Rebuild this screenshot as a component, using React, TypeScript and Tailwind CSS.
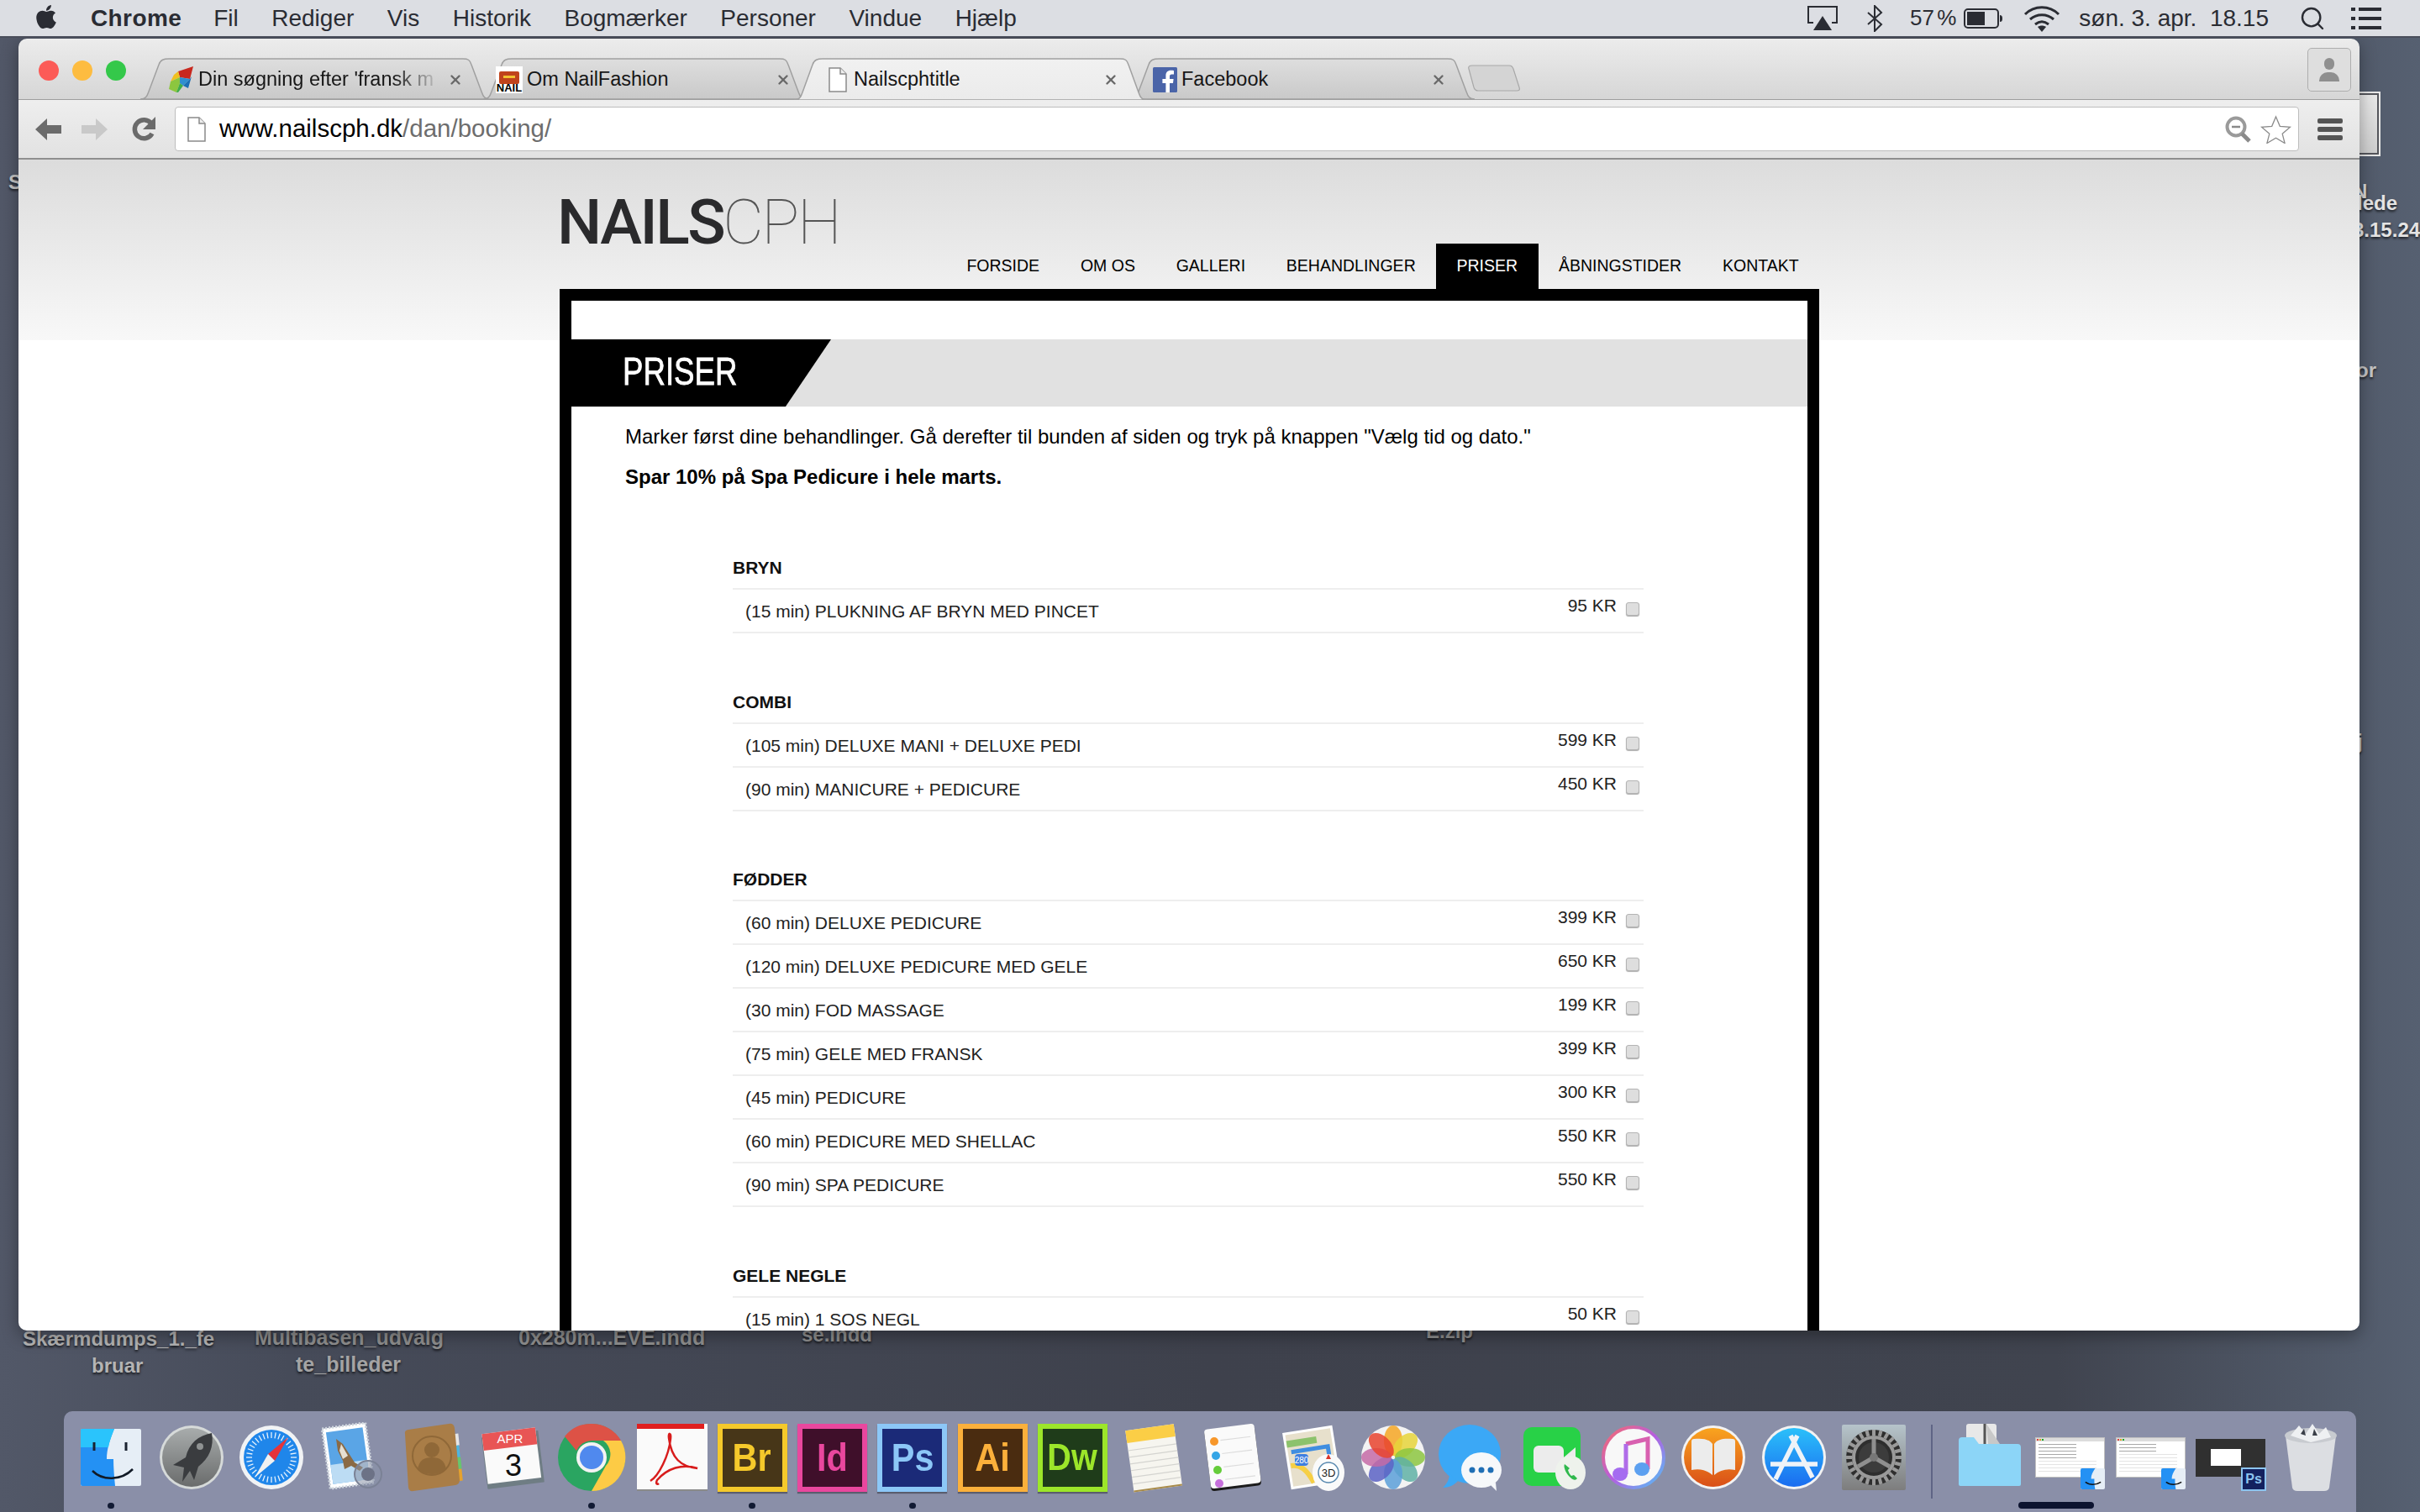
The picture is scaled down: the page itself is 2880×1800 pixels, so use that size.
import type { ReactNode } from 'react';
import { FaApple } from 'react-icons/fa';
import { X, Search } from 'lucide-react';

const sans = "font-['Liberation_Sans',Arial,sans-serif]";

const sections = [
  { title: 'BRYN', rows: [['(15 min) PLUKNING AF BRYN MED PINCET', '95 KR']] },
  {
    title: 'COMBI',
    rows: [
      ['(105 min) DELUXE MANI + DELUXE PEDI', '599 KR'],
      ['(90 min) MANICURE + PEDICURE', '450 KR'],
    ],
  },
  {
    title: 'FØDDER',
    rows: [
      ['(60 min) DELUXE PEDICURE', '399 KR'],
      ['(120 min) DELUXE PEDICURE MED GELE', '650 KR'],
      ['(30 min) FOD MASSAGE', '199 KR'],
      ['(75 min) GELE MED FRANSK', '399 KR'],
      ['(45 min) PEDICURE', '300 KR'],
      ['(60 min) PEDICURE MED SHELLAC', '550 KR'],
      ['(90 min) SPA PEDICURE', '550 KR'],
    ],
  },
  { title: 'GELE NEGLE', rows: [['(15 min) 1 SOS NEGL', '50 KR']] },
];

const navItems = ['FORSIDE', 'OM OS', 'GALLERI', 'BEHANDLINGER', 'PRISER', 'ÅBNINGSTIDER', 'KONTAKT'];
const menuItems = ['Fil', 'Rediger', 'Vis', 'Historik', 'Bogmærker', 'Personer', 'Vindue', 'Hjælp'];

function MenuBar() {
  return (
    <div className="relative z-20 flex h-[45px] items-center border-b-[2px] border-[#4a4e5b] bg-[#dcdee3] text-[28px] text-[#2a2c33]">
      <FaApple className="ml-[40px] mb-[3px] h-[32px] w-[30px]" />
      <span className="ml-[38px] font-bold tracking-[0.4px]">Chrome</span>
      <div className="ml-[38px] flex gap-[39.500px]">
        {menuItems.map((m) => (
          <span key={m}>{m}</span>
        ))}
      </div>
      <div className="ml-auto flex items-center">
        <svg width="36" height="30" viewBox="0 0 36 30" className="mr-[34px]">
          <path d="M7 20H1V1h34v19h-6" fill="none" stroke="#2a2c33" strokeWidth="2" />
          <path d="M18 12l11 17H7z" fill="#2a2c33" />
        </svg>
        <svg width="20" height="32" viewBox="0 0 20 32" className="mr-[32px]">
          <path d="M2 9l16 14-8 8V1l8 8L2 23" fill="none" stroke="#2a2c33" strokeWidth="2" />
        </svg>
        <span className="text-[26px] [word-spacing:-4px]">57 %</span>
        <svg width="46" height="24" viewBox="0 0 46 24" className="ml-[9px] mr-[25px]">
          <rect x="1" y="1" width="40" height="22" rx="4" fill="none" stroke="#2a2c33" strokeWidth="2" />
          <rect x="4" y="4" width="21" height="16" fill="#2a2c33" />
          <path d="M43 8c2 0 3 1 3 4s-1 4-3 4z" fill="#2a2c33" />
        </svg>
        <svg width="44" height="32" viewBox="0 0 44 32" className="mr-[22px]">
          <path d="M2 11c11-11 29-11 40 0M8 17c8-7 20-7 28 0M14 23c5-4 11-4 16 0" fill="none" stroke="#2a2c33" strokeWidth="3" />
          <path d="M22 32l-5-6c3-2 7-2 10 0z" fill="#2a2c33" />
        </svg>
        <span className="whitespace-pre">søn. 3. apr.  18.15</span>
        <Search className="ml-[36px] h-[32px] w-[32px]" strokeWidth={1.8} />
        <svg width="36" height="26" viewBox="0 0 36 26" className="ml-[30px] mr-[46px]">
          <path d="M0 2h5M9 2h27M0 13h5M9 13h27M0 24h5M9 24h27" stroke="#2a2c33" strokeWidth="4" />
        </svg>
      </div>
    </div>
  );
}

function TabShape({ w, h, active }: { w: number; h: number; active?: boolean }) {
  const id = active ? 'tabActive' : 'tabIdle';
  return (
    <svg width={w} height={h} viewBox={`0 0 ${w} ${h}`} className="absolute inset-0">
      <defs>
        <linearGradient id={id} x1="0" y1="0" x2="0" y2="1">
          <stop offset="0" stopColor={active ? '#f1f1f1' : '#dedede'} />
          <stop offset="1" stopColor={active ? '#ebebeb' : '#c9c9c9'} />
        </linearGradient>
      </defs>
      <path
        d={`M0 ${h}C6 ${h} 8 ${h - 3} 10 ${h - 9}L22 8C24 2 28 1 34 1L${w - 32} 1C${w - 26} 1 ${w - 24} 2 ${w - 22} 8L${w - 10} ${h - 9}C${w - 8} ${h - 3} ${w - 6} ${h} ${w} ${h}Z`}
        fill={`url(#${id})`}
        stroke="#a0a0a0"
        strokeWidth="1.5"
      />
    </svg>
  );
}

function GoogleFav() {
  return (
    <svg width="32" height="32" viewBox="0 0 32 32" className="shrink-0">
      <path d="M12 6L30 0l-4 15-12-2z" fill="#c8281e" />
      <path d="M12 6l2 7-11 5 4-8z" fill="#f0c020" />
      <path d="M14 13l12 2-8 8-4-3z" fill="#2f8fd0" />
      <path d="M3 18l11-5 0 7-4 11-9-4z" fill="#8cc63f" />
      <path d="M14 20l4 3-6 8-2 0z" fill="#3fae49" />
      <path d="M26 15l2-3-4 14-6-3z" fill="#1b6fb5" />
    </svg>
  );
}

function NailFav() {
  return (
    <div className="flex h-[32px] w-[32px] shrink-0 flex-col items-center bg-white pt-[6px]">
      <div className="relative h-[15px] w-[24px] rounded-[2px] bg-[#c0431c]">
        <div className="absolute left-[5px] top-[5px] h-[3px] w-[14px] bg-[#f2c230]" />
      </div>
      <span className="mt-[-1px] text-[13px] font-bold leading-[12px] text-black">NAIL</span>
    </div>
  );
}

function DocIcon({ w, h }: { w: number; h: number }) {
  return (
    <svg width={w} height={h} viewBox="0 0 22 30" className="shrink-0">
      <path d="M1 1h13l7 7v21H1z" fill="#fff" stroke="#8a8a8a" strokeWidth="1.5" />
      <path d="M14 1v7h7" fill="#eee" stroke="#8a8a8a" strokeWidth="1.5" />
    </svg>
  );
}

function FbFav() {
  return (
    <svg width="29" height="30" viewBox="0 0 29 30" className="shrink-0">
      <rect width="29" height="30" rx="1.5" fill="#4a64a8" />
      <path d="M20 30V19h4l.6-5H20v-3c0-1.500.6-2.500 2.500-2.500H25V4c-.6-.1-2-.2-3.600-.2-3.600 0-6 2.200-6 6V14h-4v5h4v11z" fill="#fff" />
    </svg>
  );
}

function Tab({
  w,
  active,
  className,
  icon,
  title,
  fade,
  closeRight,
  pl,
  gap,
}: {
  w: number;
  active?: boolean;
  className: string;
  icon: ReactNode;
  title: string;
  fade?: boolean;
  closeRight: string;
  pl: string;
  gap: string;
}) {
  return (
    <div className={`relative shrink-0 ${active ? 'z-10 mb-[-1px] h-[50px]' : 'h-[49px]'} ${className}`} style={{ width: w }}>
      <TabShape w={w} h={active ? 50 : 49} active={active} />
      <div className={`relative flex h-[49px] items-center pt-[2px] ${pl}`}>
        {icon}
        <span
          className={`min-w-0 flex-1 overflow-hidden whitespace-nowrap text-[23.500px] text-[#161616] ${gap} ${
            fade ? '[mask-image:linear-gradient(90deg,#000_80%,transparent_100%)]' : ''
          }`}
        >
          {title}
        </span>
        <X className={`h-[18px] w-[18px] shrink-0 text-[#6a6a6a] ${closeRight}`} strokeWidth={3.2} />
      </div>
    </div>
  );
}

function TabStrip() {
  return (
    <div className="flex h-[73px] items-end border-b-[1.5px] border-[#9e9e9e] bg-gradient-to-b from-[#ececec] to-[#d6d6d6] pl-[145px] pr-[10px]">
      <div className="absolute left-[24px] top-[26px] flex gap-[16px]">
        <span className="h-[24px] w-[24px] rounded-full bg-[#fc5b57]" />
        <span className="h-[24px] w-[24px] rounded-full bg-[#fdbc40]" />
        <span className="h-[24px] w-[24px] rounded-full bg-[#34c84a]" />
      </div>
      <Tab w={416} className="" pl="pl-[33px]" gap="ml-[4px]" icon={<GoogleFav />} title="Din søgning efter 'fransk m" fade closeRight="ml-[8px] mr-[32px]" />
      <Tab w={385} className="ml-[-8px]" pl="pl-[15px]" gap="ml-[5px]" icon={<NailFav />} title="Om NailFashion" closeRight="ml-[8px] mr-[19px]" />
      <Tab w={420} active className="ml-[-15px]" pl="pl-[41px]" gap="ml-[8px]" icon={<DocIcon w={22} h={30} />} title="Nailscphtitle" closeRight="ml-[8px] mr-[34px]" />
      <Tab w={410} className="ml-[-20px]" pl="pl-[27px]" gap="ml-[5px]" icon={<FbFav />} title="Facebook" closeRight="ml-[8px] mr-[34px]" />
      <svg width="64" height="32" viewBox="0 0 64 32" className="relative mb-[9px] ml-[-9px]">
        <path d="M2 5C1 2 3 1 6 1h44c3 0 4 1 5 4l7 22c1 3 0 4-3 4H13c-3 0-4-1-5-4z" fill="#d4d4d4" stroke="#a8a8a8" strokeWidth="1.2" />
      </svg>
      <div className="ml-auto mb-[9px] flex h-[52px] w-[52px] flex-col items-center justify-center rounded-[5px] border-[1.5px] border-[#aeaeae] bg-[#dedede]">
        <span className="h-[14px] w-[12px] rounded-full bg-[#8f8f8f]" />
        <span className="mt-[3px] h-[11px] w-[24px] rounded-t-[10px] bg-[#8f8f8f]" />
      </div>
    </div>
  );
}

function Toolbar() {
  return (
    <div className="flex h-[71px] items-center border-b-[2px] border-[#8f8f8f] bg-gradient-to-b from-[#eeeeee] to-[#e2e2e2] pl-[19px] pr-[20px]">
      <svg width="32" height="28" viewBox="0 0 32 28">
        <path d="M15 1L1 14l14 13v-8h17V9H15z" fill="#6b6b6b" />
      </svg>
      <svg width="32" height="28" viewBox="0 0 32 28" className="ml-[24px]">
        <path d="M17 1l14 13-14 13v-8H0V9h17z" fill="#c9c9c9" />
      </svg>
      <svg width="30" height="32" viewBox="0 0 30 32" className="ml-[27px]">
        <path d="M25 21a11 11 0 1 1-1-12" fill="none" stroke="#6b6b6b" strokeWidth="5.500" />
        <path d="M29 1v15H14z" fill="#6b6b6b" />
      </svg>
      <div className="ml-[22px] flex h-[53px] flex-1 items-center rounded-[4px] border-[1.5px] border-[#bdbdbd] bg-white pl-[14px] pr-[8px]">
        <DocIcon w={22} h={30} />
        <span className="ml-[16px] text-[29.500px] text-black">
          www.nailscph.dk<span className="text-[#6d6d6d]">/dan/booking/</span>
        </span>
        <svg width="32" height="32" viewBox="0 0 32 32" className="ml-auto">
          <circle cx="13" cy="13" r="10.500" fill="none" stroke="#9a9a9a" strokeWidth="4" />
          <path d="M20 21l9 9" stroke="#8a8a8a" strokeWidth="5" />
          <path d="M8 13h10" stroke="#8a8a8a" strokeWidth="2.500" />
        </svg>
        <svg width="37" height="34" viewBox="0 0 37 34" className="ml-[10px]">
          <path d="M18.500 2l4.800 11.300 12.200 1-9.300 8 2.900 11.200-10.600-6.200-10.600 6.200 2.900-11.200-9.300-8 12.200-1z" fill="#fff" stroke="#8b8b8b" strokeWidth="1.300" />
        </svg>
      </div>
      <div className="ml-[22px] flex w-[30px] flex-col gap-[4px]">
        <span className="h-[6px] rounded-[2px] bg-[#555]" />
        <span className="h-[6px] rounded-[2px] bg-[#555]" />
        <span className="h-[6px] rounded-[2px] bg-[#555]" />
      </div>
    </div>
  );
}

function PriceRow({ label, price }: { label: string; price: string }) {
  return (
    <div className="flex h-[52px] items-center border-b-[2px] border-[#eeeeee] pl-[15px] pr-[5px] text-[21px] text-[#222]">
      <span className="flex-1 pt-[2px]">{label}</span>
      <span className="mb-[12px]">{price}</span>
      <span className="mb-[5px] ml-[11px] h-[16px] w-[16px] rounded-[3px] border border-[#b4b4b4] bg-[#dedede] shadow-[0_1px_1px_#aaa]" />
    </div>
  );
}

function SitePage() {
  return (
    <div className="h-[1394px] overflow-hidden bg-white bg-gradient-to-b from-[#dcdcdc] to-[#f8f8f8] bg-[length:100%_215px] bg-no-repeat">
      <div className="ml-[644px] w-[1499px]">
        <div className="flex h-[154px] items-end justify-between">
          <div className="mb-[52px] ml-[-3px] flex h-[55px] items-center text-[75px] leading-[55px] text-[#2a2a2c]">
            <span className="font-['Roboto',sans-serif] font-medium tracking-[-2.500px]">NAILS</span>
            <span className="ml-[-1px] font-['Roboto',sans-serif] font-thin tracking-[-2.500px] text-[#555]">CPH</span>
          </div>
          <nav className="flex h-[54px] text-[19.500px] text-black">
            {navItems.map((n) => (
              <span key={n} className={`flex items-center px-[24.400px] ${n === 'PRISER' ? 'bg-black text-white' : ''}`}>
                {n}
              </span>
            ))}
          </nav>
        </div>
        <div className="h-[1240px] border-x-[14px] border-t-[14px] border-black bg-white">
          <div className="mt-[46px] h-[80px] bg-[#e1e1e1]">
            <div className="flex h-[80px] w-[309px] items-center bg-black pb-[4px] pl-[61px] [clip-path:polygon(0_0,100%_0,82.500%_100%,0_100%)]">
              <h1 className="origin-left scale-x-[0.78] text-[47px] text-white [-webkit-text-stroke:0.8px_white]">PRISER</h1>
            </div>
          </div>
          <div className="pl-[64px] pt-[18px] text-[24px] leading-[36px] text-black">
            <p>Marker først dine behandlinger. Gå derefter til bunden af siden og tryk på knappen "Vælg tid og dato."</p>
            <p className="mt-[12px] font-bold">Spar 10% på Spa Pedicure i hele marts.</p>
          </div>
          <div className="ml-[192px] mt-[66px] w-[1084px]">
            {sections.map((s, i) => (
              <section key={s.title} className={i === 0 ? '' : i === 2 ? 'mt-[57px]' : 'mt-[58px]'}>
                <h2 className="flex h-[48px] items-center border-b-[2px] border-[#eeeeee] box-content text-[21px] font-bold text-[#111]">{s.title}</h2>
                {s.rows.map(([label, price]) => (
                  <PriceRow key={label} label={label} price={price} />
                ))}
              </section>
            ))}
          </div>
        </div>
      </div>
    </div>
  );
}

function DesktopLabels() {
  const labelCls = 'absolute font-bold leading-[32px] [text-shadow:0_2px_3px_rgba(0,0,0,0.7)] whitespace-nowrap';
  return (
    <>
      <span className={`${labelCls} left-[27px] top-[1578px] text-[24px] text-[#b4b4b4]`}>Skærmdumps_1._fe</span>
      <span className={`${labelCls} left-[109px] top-[1610px] text-[24px] text-[#b4b4b4]`}>bruar</span>
      <span className={`${labelCls} left-[303px] top-[1576px] text-[25px] text-[#8f8f8f]`}>Multibasen_udvalg</span>
      <span className={`${labelCls} left-[352px] top-[1608px] text-[25px] text-[#a4a4a4]`}>te_billeder</span>
      <span className={`${labelCls} left-[617px] top-[1576px] text-[25px] text-[#8f8f8f]`}>0x280m...EVE.indd</span>
      <span className={`${labelCls} left-[954px] top-[1573px] text-[24px] text-[#8f8f8f]`}>se.indd</span>
      <span className={`${labelCls} left-[1697px] top-[1569px] text-[24px] text-[#8f8f8f]`}>E.zip</span>
      <span className={`${labelCls} left-[2800px] top-[212px] text-[24px] text-[#d8d8d8]`}>N</span>
      <span className={`${labelCls} left-[2805px] top-[226px] text-[24px] text-[#e4e4e4]`}>lede</span>
      <span className={`${labelCls} left-[2800px] top-[258px] text-[24px] text-[#e4e4e4]`}>3.15.24</span>
      <span className={`${labelCls} left-[2796px] top-[425px] text-[24px] text-[#c4c4c4]`}>for</span>
      <span className={`${labelCls} left-[2805px] top-[867px] text-[24px] text-[#c4c4c4]`}>j</span>
      <span className={`${labelCls} left-[10px] top-[201px] text-[24px] text-[#c4c4c4]`}>S</span>
      <div className="absolute left-[2790px] top-[109px] h-[77px] w-[43px] border-[2px] border-[#e8e8e8] bg-[#55565c] p-[2px]">
        <div className="h-full bg-gradient-to-b from-[#e8e8e8] to-[#cfcfcf]" />
      </div>
    </>
  );
}

function Slot({ children, dot }: { children: ReactNode; dot?: boolean }) {
  return (
    <div className="relative flex h-[110px] w-[95.360px] shrink-0 items-center justify-center">
      {children}
      {dot && <span className="absolute left-1/2 top-[109px] h-[7px] w-[8px] -translate-x-1/2 rounded-full bg-[#111a33]" />}
    </div>
  );
}

function AdobeTile({ text, border, bg, fg, size = 46 }: { text: string; border: string; bg: string; fg: string; size?: number }) {
  return (
    <div
      className="flex h-[81px] w-[83px] items-center justify-center border-[6px] text-center font-bold leading-none shadow-[0_2px_1px_rgba(0,0,0,0.35)]"
      style={{ borderColor: border, backgroundColor: bg, color: fg, fontSize: size }}
    >
      <span className="scale-x-[0.9]">{text}</span>
    </div>
  );
}

const svgIcon = { width: 84, height: 84, viewBox: '0 0 84 84' };

function Finder() {
  return (
    <svg {...svgIcon}>
      <rect x="6" y="8" width="72" height="68" rx="2" fill="#e6eef6" />
      <path d="M8 8h38c-5 12-9 24-9 36h8c0 10 1 22 2 32H8a2 2 0 0 1-2-2V10a2 2 0 0 1 2-2z" fill="#2491f4" />
      <path d="M8 8h38c-3 8-6 15-7 22H6V10a2 2 0 0 1 2-2z" fill="#2ac4fc" />
      <path d="M22 24v10M60 24v10" stroke="#1a2230" strokeWidth="3" />
      <path d="M20 58c12 12 34 12 48-2" fill="none" stroke="#111a26" strokeWidth="2.500" />
    </svg>
  );
}

function Launchpad() {
  return (
    <svg {...svgIcon}>
      <defs>
        <linearGradient id="lp" x1="0" y1="0" x2="0" y2="1">
          <stop offset="0" stopColor="#a8acac" />
          <stop offset="1" stopColor="#6a6c6c" />
        </linearGradient>
      </defs>
      <circle cx="42" cy="42" r="38" fill="#d6dad9" />
      <circle cx="42" cy="42" r="35" fill="url(#lp)" />
      <path d="M66 13c3 16-3 30-16 40l-5 16-5-11-9 13 2-17-13-3 15-9C39 25 50 16 66 13z" fill="#3a3c3f" />
      <circle cx="52" cy="29" r="4" fill="#8f9292" />
    </svg>
  );
}

function Safari() {
  const ticks = Array.from({ length: 36 }, (_, i) => i * 10);
  return (
    <svg {...svgIcon}>
      <circle cx="42" cy="42" r="38" fill="#f1f3f5" />
      <circle cx="42" cy="42" r="33" fill="#1f86ea" />
      {ticks.map((a) => (
        <path key={a} d="M42 12v7" stroke="#e8f3fc" strokeWidth="1.300" transform={`rotate(${a} 42 42)`} />
      ))}
      <path d="M62 18L38 38l8 8z" fill="#e5333a" />
      <path d="M22 66l16-28 8 8z" fill="#f1f1f1" />
    </svg>
  );
}

function Mail() {
  return (
    <svg {...svgIcon}>
      <g transform="rotate(-8 38 40)">
        <rect x="12" y="4" width="52" height="72" fill="#fff" strokeDasharray="2 2" stroke="#cfd6de" strokeWidth="3" />
        <rect x="16" y="9" width="44" height="62" fill="#5aa5e6" />
        <rect x="16" y="48" width="44" height="23" fill="#bcdcf4" />
      </g>
      <path d="M24 20l8 6 14 22 10 6-4 4-10-6-8 4-2-10-6-12z" fill="#8a6a45" />
      <path d="M30 26l8 14-6 4-4-10z" fill="#e6dfd2" />
      <circle cx="62" cy="62" r="16" fill="#8b93a8" fillOpacity="0.55" stroke="#7b8296" strokeWidth="2" />
      <circle cx="62" cy="62" r="8" fill="#6c7286" />
    </svg>
  );
}

function Contacts() {
  return (
    <svg {...svgIcon}>
      <rect x="68" y="14" width="6" height="14" fill="#e6e6e6" transform="rotate(-6 70 20)" />
      <rect x="69" y="28" width="6" height="14" fill="#4db6e0" transform="rotate(-6 70 35)" />
      <rect x="71" y="42" width="6" height="14" fill="#67c66e" transform="rotate(-6 72 50)" />
      <rect x="72" y="56" width="6" height="14" fill="#e5a22e" transform="rotate(-6 74 62)" />
      <path d="M10 14Q9 10 14 9L62 2q6-1 7 5l6 62q0 5-5 6L20 82q-5 1-6-4z" fill="#a97d47" />
      <circle cx="42" cy="40" r="23" fill="none" stroke="#8f6838" strokeWidth="2" />
      <circle cx="42" cy="33" r="9" fill="#8f6838" />
      <path d="M25 56c2-11 8-14 17-14s15 3 17 14c-10 8-24 8-34 0z" fill="#8f6838" />
    </svg>
  );
}

function CalendarIcon() {
  return (
    <svg {...svgIcon}>
      <g transform="rotate(-7 42 42)">
        <rect x="9" y="14" width="68" height="62" rx="1" fill="#6f7d84" />
        <rect x="10" y="10" width="64" height="60" fill="#fafafa" />
        <rect x="10" y="10" width="64" height="20" fill="#e85555" />
      </g>
      <text x="40" y="25" fontSize="15" textAnchor="middle" fill="#fff" fontFamily="Liberation Sans">APR</text>
      <text x="44" y="64" fontSize="36" textAnchor="middle" fill="#111" fontFamily="Liberation Sans">3</text>
    </svg>
  );
}

function ChromeIcon() {
  return (
    <svg width="84" height="84" viewBox="0 0 84 84">
      <circle cx="42" cy="42" r="40" fill="#2aa561" />
      <path d="M42 2a40 40 0 0 1 35 20H42a20 20 0 0 0-18 12L10 17A40 40 0 0 1 42 2z" fill="#dd5246" />
      <path d="M77 22a40 40 0 0 1-35 60l17-30a20 20 0 0 0-3-30z" fill="#fdcb45" />
      <circle cx="42" cy="42" r="18" fill="#f3f3f3" />
      <circle cx="42" cy="42" r="14" fill="#5089ee" />
    </svg>
  );
}

function Acrobat() {
  return (
    <svg {...svgIcon}>
      <rect x="0" y="2" width="84" height="80" fill="#fafafa" />
      <rect x="0" y="80" width="84" height="2" fill="#8a8a8a" />
      <rect x="0" y="2" width="80" height="6" fill="#e01f1f" />
      <path d="M16 70c10-6 22-30 24-50 1-8-3-8-2-1 3 24 14 34 34 36-18-6-36 0-48 14-2 4 0 6 2 4" fill="none" stroke="#d81c1c" strokeWidth="2.500" />
    </svg>
  );
}

function NotesIcon() {
  const lines = [30, 38, 46, 54, 62, 70];
  return (
    <svg {...svgIcon}>
      <g transform="rotate(-8 42 42)">
        <rect x="14" y="6" width="58" height="74" fill="#f6f5ef" />
        <rect x="14" y="6" width="58" height="15" fill="#fbce46" />
        <rect x="14" y="78" width="58" height="2" fill="#a88b4a" />
        {lines.map((y) => (
          <path key={y} d={`M14 ${y}h58`} stroke="#d4d4d0" strokeWidth="1.200" />
        ))}
      </g>
    </svg>
  );
}

function RemindersIcon() {
  return (
    <svg {...svgIcon}>
      <g transform="rotate(-7 42 42)">
        <rect x="12" y="7" width="60" height="72" rx="4" fill="#1c1c1c" />
        <rect x="12" y="5" width="60" height="71" rx="4" fill="#fafafa" />
        <path d="M30 20h36M30 36h36M30 52h36M30 67h36" stroke="#dcdcdc" strokeWidth="1.200" />
      </g>
      <circle cx="20" cy="23" r="5" fill="#f7972a" />
      <circle cx="22" cy="40" r="5" fill="#35a5e6" />
      <circle cx="24" cy="57" r="5" fill="#65cc3a" />
      <circle cx="26" cy="73" r="5" fill="#c670db" />
    </svg>
  );
}

function MapsIcon() {
  return (
    <svg {...svgIcon}>
      <g transform="rotate(-9 40 42)">
        <rect x="10" y="8" width="60" height="68" fill="#fff" />
        <rect x="13" y="11" width="54" height="62" fill="#e7e0cc" />
        <rect x="13" y="18" width="36" height="8" fill="#8cc26c" />
        <path d="M17 32h44v24" fill="none" stroke="#3f8de0" strokeWidth="5" />
        <path d="M14 48c12 0 18 8 24 24" fill="none" stroke="#f6cf45" strokeWidth="6" />
      </g>
      <rect x="20" y="38" width="16" height="14" rx="4" fill="#3f7fe0" />
      <text x="28" y="49" fontSize="10" textAnchor="middle" fill="#fff" fontFamily="Liberation Sans">280</text>
      <ellipse cx="60" cy="60" rx="19" ry="22" fill="#fafafa" />
      <circle cx="60" cy="60" r="12" fill="#fff" stroke="#5a8ab0" strokeWidth="1.500" />
      <text x="60" y="65" fontSize="13" textAnchor="middle" fill="#222" fontFamily="Liberation Sans">3D</text>
      <path d="M60 38l3 6h-6z" fill="#d8352b" />
    </svg>
  );
}

function PhotosIcon() {
  const petals = [
    ['#f5a623', 0],
    ['#e6d33a', 45],
    ['#8cc63f', 90],
    ['#5fb0a5', 135],
    ['#5a9fd8', 180],
    ['#5a62c4', 225],
    ['#c46aa6', 270],
    ['#e8432e', 315],
  ] as const;
  return (
    <svg {...svgIcon}>
      <circle cx="42" cy="42" r="38" fill="#f3f3f3" />
      {petals.map(([c, a]) => (
        <ellipse key={a} cx="42" cy="22" rx="11" ry="18" fill={c} fillOpacity="0.85" transform={`rotate(${a} 42 42)`} />
      ))}
    </svg>
  );
}

function MessagesIcon() {
  return (
    <svg {...svgIcon}>
      <ellipse cx="38" cy="38" rx="37" ry="35" fill="#3ba8f6" />
      <path d="M14 62c0 6-4 13-8 16 7 0 14-3 18-8z" fill="#3ba8f6" />
      <ellipse cx="52" cy="57" rx="24" ry="21" fill="#f6f8fa" />
      <path d="M62 74l8 8-1-10z" fill="#f6f8fa" />
      <circle cx="41" cy="57" r="3.500" fill="#1f6fb5" />
      <circle cx="52" cy="57" r="3.500" fill="#1f6fb5" />
      <circle cx="63" cy="57" r="3.500" fill="#1f6fb5" />
    </svg>
  );
}

function FaceTimeIcon() {
  return (
    <svg {...svgIcon}>
      <rect x="6" y="6" width="68" height="70" rx="10" fill="#28d147" />
      <rect x="18" y="28" width="36" height="32" rx="6" fill="#ececec" />
      <path d="M54 42l14-12v28z" fill="#ececec" />
      <ellipse cx="62" cy="60" rx="18" ry="20" fill="#eef2ec" />
      <path d="M55 50c-2 3 2 12 7 16 3 3 6 4 8 1l-4-4-3 1c-2-2-3-4-4-7l2-2z" fill="#2fb84c" />
    </svg>
  );
}

function ITunesIcon() {
  return (
    <svg {...svgIcon}>
      <defs>
        <linearGradient id="itRing" x1="0" y1="0" x2="1" y2="1">
          <stop offset="0" stopColor="#f96a6a" />
          <stop offset="0.5" stopColor="#b55ee0" />
          <stop offset="1" stopColor="#4fc4f7" />
        </linearGradient>
        <linearGradient id="itNote" x1="0" y1="0" x2="0" y2="1">
          <stop offset="0" stopColor="#f8506a" />
          <stop offset="0.6" stopColor="#b06ce8" />
          <stop offset="1" stopColor="#4f9bf0" />
        </linearGradient>
      </defs>
      <circle cx="42" cy="42" r="36" fill="#f8f8f8" stroke="url(#itRing)" strokeWidth="4" />
      <path d="M33 26l26-6v36" fill="none" stroke="#d860b0" strokeWidth="5" />
      <path d="M33 26v36" stroke="#b06ce8" strokeWidth="5" />
      <ellipse cx="26" cy="62" rx="9" ry="8" fill="#a56cf0" />
      <ellipse cx="52" cy="56" rx="9" ry="8" fill="#5ca0f0" />
    </svg>
  );
}

function BooksIcon() {
  return (
    <svg {...svgIcon}>
      <defs>
        <linearGradient id="bk" x1="0" y1="0" x2="0" y2="1">
          <stop offset="0" stopColor="#f9a41f" />
          <stop offset="1" stopColor="#d94f18" />
        </linearGradient>
      </defs>
      <circle cx="42" cy="42" r="38" fill="#f3f3f3" />
      <circle cx="42" cy="42" r="35" fill="url(#bk)" />
      <path d="M41 26c-4-6-12-7-22-6-2 0-3 1-3 3v34c10-2 18 0 25 6z" fill="#ececec" />
      <path d="M43 26c4-6 12-7 22-6 2 0 3 1 3 3v34c-10-2-18 0-25 6z" fill="#ececec" />
    </svg>
  );
}

function AppStoreIcon() {
  return (
    <svg {...svgIcon}>
      <defs>
        <linearGradient id="as" x1="0" y1="0" x2="0" y2="1">
          <stop offset="0" stopColor="#2bc0fa" />
          <stop offset="1" stopColor="#1a6cf0" />
        </linearGradient>
      </defs>
      <circle cx="42" cy="42" r="38" fill="#f3f3f3" />
      <circle cx="42" cy="42" r="35" fill="url(#as)" />
      <path d="M46 16L20 68M38 16l26 50M14 50h56" stroke="#eef3f8" strokeWidth="5.500" fill="none" />
    </svg>
  );
}

function SysPrefs() {
  const teeth = Array.from({ length: 24 }, (_, i) => i * 15);
  return (
    <svg {...svgIcon}>
      <defs>
        <linearGradient id="sp" x1="0" y1="0" x2="0" y2="1">
          <stop offset="0" stopColor="#b6c4cb" />
          <stop offset="1" stopColor="#7d7d7d" />
        </linearGradient>
      </defs>
      <rect x="4" y="3" width="76" height="78" rx="2" fill="url(#sp)" />
      <circle cx="42" cy="42" r="33" fill="#2e2e2e" />
      {teeth.map((a) => (
        <rect key={a} x="40" y="9" width="4" height="7" fill="#9a9a9a" transform={`rotate(${a} 42 42)`} />
      ))}
      <circle cx="42" cy="42" r="24" fill="none" stroke="#9a9a9a" strokeWidth="4" />
      <circle cx="42" cy="42" r="18" fill="#3c3c3c" />
      <path d="M42 42V20M42 42L23 53M42 42l19 11" stroke="#8f8f8f" strokeWidth="5" />
      <circle cx="42" cy="42" r="5" fill="#777" />
    </svg>
  );
}

function Folder() {
  return (
    <svg {...svgIcon}>
      <rect x="14" y="2" width="36" height="30" rx="3" fill="#e8e8e8" />
      <path d="M38 2l16 24H40z" fill="#c8c8c8" />
      <path d="M36 2v24" stroke="#555" strokeWidth="3" />
      <path d="M5 22q0-4 4-4h14l6 8h46q4 0 4 4v44q0 2-2 2H7q-2 0-2-2z" fill="#8cd5f7" />
    </svg>
  );
}

function FinderBadge() {
  return (
    <svg width="29" height="25" viewBox="0 0 30 26" preserveAspectRatio="none" className="absolute bottom-[-15px] right-[-1px]">
      <rect width="30" height="26" rx="2" fill="#e6eef6" />
      <path d="M0 2a2 2 0 0 1 2-2h16c-3 5-5 8-5 13h4c0 4 0 8 1 13H2a2 2 0 0 1-2-2z" fill="#2491f4" />
      <path d="M6 17c5 4 13 4 19 0" fill="none" stroke="#111" strokeWidth="1.500" />
    </svg>
  );
}

function DocThumb({ filled }: { filled: number }) {
  const lines = Array.from({ length: 9 }, (_, i) => i);
  return (
    <div className="relative h-[48px] w-[83px] border border-[#c0c0c0] bg-white">
      <div className="flex h-[4px] gap-[1px] bg-[#dcdcdc] pl-[1px] pt-[1px]">
        <span className="h-[2px] w-[2px] bg-[#e0443e]" />
        <span className="h-[2px] w-[2px] bg-[#dea123]" />
        <span className="h-[2px] w-[2px] bg-[#1aab29]" />
      </div>
      {lines.map((l) => (
        <div
          key={l}
          className={`mx-[3px] mt-[3px] h-[1px] ${l < filled ? 'w-[55%] bg-[#a8a8a8]' : 'w-[85%] bg-[#e4e4e4]'}`}
        />
      ))}
      <FinderBadge />
    </div>
  );
}

function PsThumb() {
  return (
    <div className="relative flex h-[45px] w-[83px] items-center justify-center bg-[#303030]">
      <div className="mr-[12px] h-[20px] w-[36px] bg-white" />
      <div className="absolute bottom-[-17px] right-[-1px] flex h-[28px] w-[30px] items-center justify-center border-[2px] border-[#8cc4ef] bg-[#13215f] text-[16px] font-bold text-[#8cc4ef]">
        Ps
      </div>
    </div>
  );
}

function Trash() {
  return (
    <svg {...svgIcon}>
      <path d="M12 16h60l-8 62q-1 4-6 4H26q-5 0-6-4z" fill="#dcdee2" />
      <ellipse cx="42" cy="16" rx="31" ry="9" fill="#c8cbd0" />
      <path d="M18 16l10-12 8 10 8-12 8 12 8-8 6 12-24 6z" fill="#eef0f2" />
      <path d="M30 14l4-6 2 8zM46 8l4 8-6 0z" fill="#3a3f48" />
    </svg>
  );
}

function Dock() {
  return (
    <div className="absolute bottom-0 left-[76px] z-0 flex h-[120px] w-[2728px] rounded-t-[10px] bg-[#8a8fa8] pl-[8.500px] pt-0">
      <Slot dot><Finder /></Slot>
      <Slot><Launchpad /></Slot>
      <Slot><Safari /></Slot>
      <Slot><Mail /></Slot>
      <Slot><Contacts /></Slot>
      <Slot><CalendarIcon /></Slot>
      <Slot dot><ChromeIcon /></Slot>
      <Slot><Acrobat /></Slot>
      <Slot dot><AdobeTile text="Br" border="#f5c92b" bg="#473618" fg="#f5c92b" /></Slot>
      <Slot><AdobeTile text="Id" border="#e9479e" bg="#3f0f2a" fg="#e9479e" /></Slot>
      <Slot dot><AdobeTile text="Ps" border="#8cc7f7" bg="#1b2a78" fg="#8cc7f7" /></Slot>
      <Slot><AdobeTile text="Ai" border="#fbb03b" bg="#4a2c10" fg="#fbb03b" /></Slot>
      <Slot><AdobeTile text="Dw" border="#9ce62a" bg="#1f3c1a" fg="#9ce62a" size={44} /></Slot>
      <Slot><NotesIcon /></Slot>
      <Slot><RemindersIcon /></Slot>
      <Slot><MapsIcon /></Slot>
      <Slot><PhotosIcon /></Slot>
      <Slot><MessagesIcon /></Slot>
      <Slot><FaceTimeIcon /></Slot>
      <Slot><ITunesIcon /></Slot>
      <Slot><BooksIcon /></Slot>
      <Slot><AppStoreIcon /></Slot>
      <Slot><SysPrefs /></Slot>
      <div className="flex h-[120px] w-[43px] shrink-0 items-start justify-center pt-[16px]">
        <span className="h-[88px] w-[2px] bg-[#5f6585]" />
      </div>
      <Slot><Folder /></Slot>
      <Slot><DocThumb filled={5} /></Slot>
      <Slot><DocThumb filled={3} /></Slot>
      <Slot><PsThumb /></Slot>
      <Slot><Trash /></Slot>
      <span className="absolute left-[2326px] top-[108px] h-[8px] w-[90px] rounded-full bg-[#0d1430]" />
    </div>
  );
}

export default function App() {
  return (
    <div className={`relative h-[1800px] w-[2880px] overflow-hidden bg-[linear-gradient(90deg,#525868_0%,#464b59_12%,#3e414c_50%,#40444f_85%,#566071_100%)] ${sans}`}>
      <MenuBar />
      <DesktopLabels />
      <Dock />
      <div className="absolute left-[22px] top-[46px] z-10 w-[2786px] overflow-hidden rounded-[10px] shadow-[0_6px_20px_rgba(0,0,0,0.35)]">
        <TabStrip />
        <Toolbar />
        <SitePage />
      </div>
    </div>
  );
}
